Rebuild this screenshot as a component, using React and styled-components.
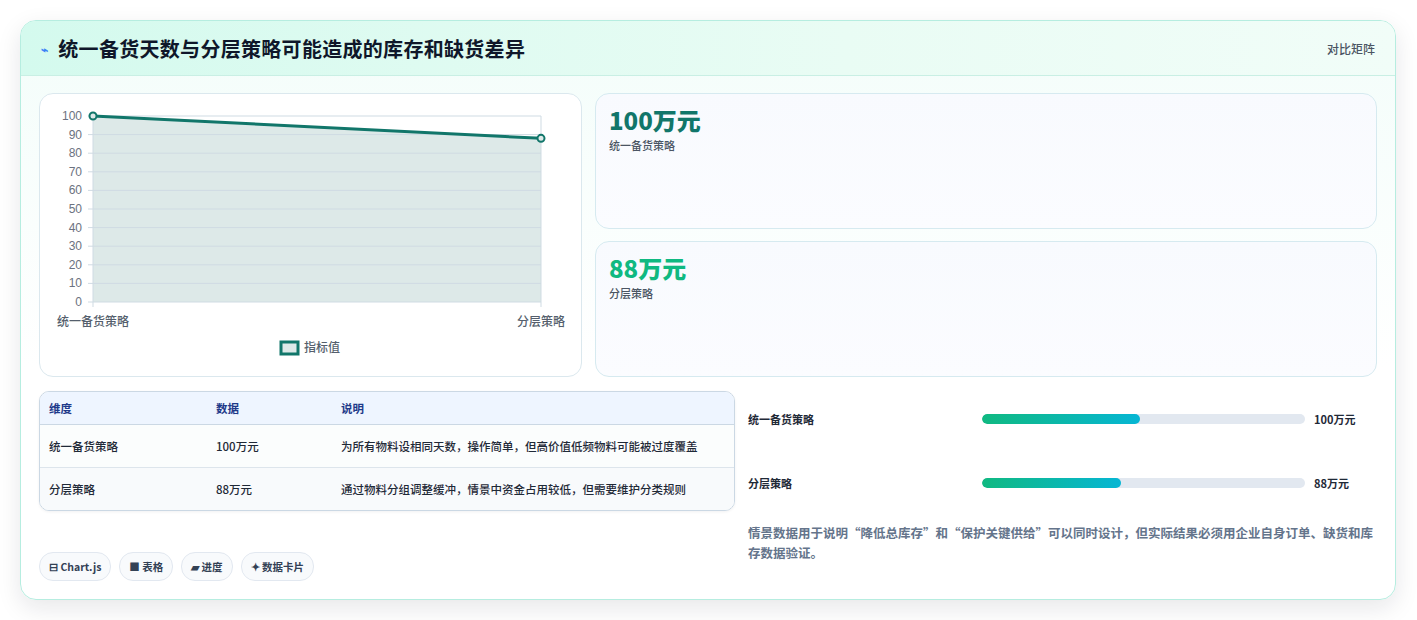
import React from 'react';
import styled, { createGlobalStyle } from 'styled-components';

const Global = createGlobalStyle`
  body { margin: 0; background: #fff; font-family: "Noto Sans CJK SC", "Noto Sans", sans-serif; }
`;

const bars = [
  { name: '统一备货策略', value: '100万元', pct: 48.9 },
  { name: '分层策略', value: '88万元', pct: 43 },
];

const rows = [
  ['统一备货策略', '100万元', '为所有物料设相同天数，操作简单，但高价值低频物料可能被过度覆盖'],
  ['分层策略', '88万元', '通过物料分组调整缓冲，情景中资金占用较低，但需要维护分类规则'],
];

function Chart() {
  const x0 = 93, x1 = 541, yTop = 115, yBot = 301;
  const y = (v) => yBot - (v / 100) * (yBot - yTop);
  const ticks = [0, 10, 20, 30, 40, 50, 60, 70, 80, 90, 100];
  return (
    <svg width="543" height="284" viewBox="39 92 543 284">
      <path d={`M${x0} ${y(100)} L${x1} ${y(88)} L${x1} ${yBot} L${x0} ${yBot}Z`} fill="#dde9e8" />
      {ticks.map((t) => (
        <g key={t}>
          <line x1={x0 - 5} x2={x1} y1={y(t)} y2={y(t)} stroke="#cfdbe3" strokeWidth="1" />
          <text x={82} y={y(t) + 4} textAnchor="end" fontSize="12" fill="#6b7280" fontFamily="Liberation Sans, sans-serif">{t}</text>
        </g>
      ))}
      <line x1={x0} x2={x0} y1={yTop} y2={yBot + 5} stroke="#cfdbe3" />
      <line x1={x1} x2={x1} y1={yTop} y2={yBot + 5} stroke="#cfdbe3" />
      <line x1={x0} x2={x1} y1={y(100)} y2={y(88)} stroke="#11766a" strokeWidth="3" />
      <circle cx={x0} cy={y(100)} r="3.5" fill="#dde9e8" stroke="#11766a" strokeWidth="2" />
      <circle cx={x1} cy={y(88)} r="3.5" fill="#dde9e8" stroke="#11766a" strokeWidth="2" />
      <text x={x0} y={325} textAnchor="middle" fontSize="12" fontWeight="500" fill="#555f6d">统一备货策略</text>
      <text x={x1} y={325} textAnchor="middle" fontSize="12" fontWeight="500" fill="#555f6d">分层策略</text>
      <rect x="281" y="341" width="17" height="12" fill="#dde9e8" stroke="#11766a" strokeWidth="3" />
      <text x="304" y="351" fontSize="12" fontWeight="500" fill="#555f6d">指标值</text>
    </svg>
  );
}

export default function App() {
  return (
    <>
      <Global />
      <Page>
        <Card>
          <Header>
            <Title><Bolt>⌁</Bolt>统一备货天数与分层策略可能造成的库存和缺货差异</Title>
            <Tag>对比矩阵</Tag>
          </Header>
          <Body>
            <TopGrid>
              <ChartBox><Chart /></ChartBox>
              <Stats>
                <Stat><StatValue color="#11766a">100万元</StatValue><StatLabel>统一备货策略</StatLabel></Stat>
                <Stat><StatValue color="#10b981">88万元</StatValue><StatLabel>分层策略</StatLabel></Stat>
              </Stats>
            </TopGrid>
            <BottomGrid>
              <LeftCol>
                <Table>
                  <colgroup><col width="167" /><col width="125" /><col /></colgroup>
                  <thead>
                    <tr><Th>维度</Th><Th>数据</Th><Th>说明</Th></tr>
                  </thead>
                  <tbody>
                    {rows.map((r, i) => (
                      <Tr key={i} $alt={i === 1}>{r.map((c, j) => <Td key={j}>{c}</Td>)}</Tr>
                    ))}
                  </tbody>
                </Table>
                <Chips>
                  <Chip>⊟ Chart.js</Chip>
                  <Chip>■ 表格</Chip>
                  <Chip>▰ 进度</Chip>
                  <Chip>✦ 数据卡片</Chip>
                </Chips>
              </LeftCol>
              <RightCol>
                {bars.map((b) => (
                  <BarRow key={b.name}>
                    <span>{b.name}</span>
                    <Track><Fill style={{ width: `${b.pct}%` }} /></Track>
                    <BarValue>{b.value}</BarValue>
                  </BarRow>
                ))}
                <Note>情景数据用于说明“降低总库存”和“保护关键供给”可以同时设计，但实际结果必须用企业自身订单、缺货和库存数据验证。</Note>
              </RightCol>
            </BottomGrid>
          </Body>
        </Card>
      </Page>
    </>
  );
}

const Page = styled.div`
  padding: 20px 21px 21px 20px;
  width: 1417px;
  box-sizing: border-box;
`;
const Card = styled.div`
  border: 1px solid #b6ede0;
  border-radius: 16px;
  overflow: hidden;
  background: linear-gradient(180deg, #f3fdfa, #ffffff 60%);
  box-shadow: 0 8px 24px rgba(15, 23, 42, 0.1);
`;
const Header = styled.div`
  height: 54px;
  display: flex;
  align-items: center;
  justify-content: space-between;
  padding: 0 20px;
  background: linear-gradient(90deg, #d4faee, #e9fcf4 60%, #f1fdf8);
  border-bottom: 1px solid #c9efe4;
`;
const Title = styled.h1`
  margin: 0;
  font-size: 20px;
  font-weight: 700;
  letter-spacing: 0.3px;
  color: #0f172a;
  display: flex;
  align-items: center;
  gap: 10px;
`;
const Bolt = styled.span`
  color: #3b82f6;
  font-size: 12px;
`;
const Tag = styled.span`
  font-size: 12px;
  font-weight: 500;
  color: #4b5563;
`;
const Body = styled.div`
  padding: 17px 18px 18px 18px;
`;
const TopGrid = styled.div`
  display: grid;
  grid-template-columns: 543px 1fr;
  gap: 13px;
`;
const ChartBox = styled.div`
  height: 282px;
  border: 1px solid #dbe8ee;
  border-radius: 14px;
  background: #fff;
  overflow: hidden;
  svg { display: block; margin: -1px; }
`;
const Stats = styled.div`
  display: grid;
  grid-template-rows: 1fr 1fr;
  gap: 12px;
`;
const Stat = styled.div`
  border: 1px solid #d6eaf0;
  border-radius: 14px;
  background: linear-gradient(180deg, #f8fafe, #fbfcff);
  padding: 9px 13px;
`;
const StatValue = styled.div`
  font-size: 24px;
  font-weight: 800;
  color: ${(p) => p.color};
  line-height: 34px;
`;
const StatLabel = styled.div`
  font-size: 11px;
  font-weight: 500;
  color: #4b5563;
`;
const BottomGrid = styled.div`
  display: grid;
  grid-template-columns: 696px 1fr;
  gap: 13px;
  margin-top: 14px;
`;
const LeftCol = styled.div`
  display: flex;
  flex-direction: column;
  gap: 41px;
`;
const Table = styled.table`
  width: 100%;
  table-layout: fixed;
  border-collapse: separate;
  border-spacing: 0;
  border: 1px solid #cbd8e4;
  border-radius: 10px;
  overflow: hidden;
  font-size: 11.5px;
  box-shadow: 0 1px 3px rgba(15, 23, 42, 0.06);
`;
const Th = styled.th`
  text-align: left;
  font-weight: 600;
  color: #1e3a8a;
  background: #eef5ff;
  height: 32px;
  padding: 0 9px;
  border-bottom: 1px solid #cbd8e4;
`;
const Tr = styled.tr`
  background: ${(p) => (p.$alt ? '#f8fafc' : '#fbfdfd')};
  td { border-top: ${(p) => (p.$alt ? '1px solid #dde5ec' : 'none')}; }
`;
const Td = styled.td`
  height: 42px;
  padding: 0 9px;
  color: #1f2937;
  font-weight: 500;
  white-space: nowrap;
`;
const Chips = styled.div`
  display: flex;
  gap: 8px;
`;
const Chip = styled.span`
  height: 27px;
  padding: 0 9px;
  display: flex;
  align-items: center;
  border: 1px solid #e2e8f0;
  border-radius: 14px;
  background: #f8fafc;
  font-size: 10.5px;
  font-weight: 600;
  color: #334155;
`;
const RightCol = styled.div`
  display: flex;
  flex-direction: column;
  padding-top: 8px;
`;
const BarRow = styled.div`
  display: grid;
  grid-template-columns: 234px 323px 1fr;
  align-items: center;
  height: 40px;
  margin-bottom: 24px;
  font-size: 11px;
  font-weight: 600;
  color: #1f2937;
`;
const Track = styled.div`
  height: 10px;
  border-radius: 5px;
  background: #e2e8f0;
  overflow: hidden;
`;
const Fill = styled.div`
  height: 100%;
  border-radius: 5px;
  background: linear-gradient(90deg, #10b981, #06b6d4);
`;
const BarValue = styled.span`
  padding-left: 9px;
`;
const Note = styled.p`
  margin: -4px 0 0;
  font-size: 12.5px;
  line-height: 20px;
  color: #64748b;
  font-weight: 600;
`;
